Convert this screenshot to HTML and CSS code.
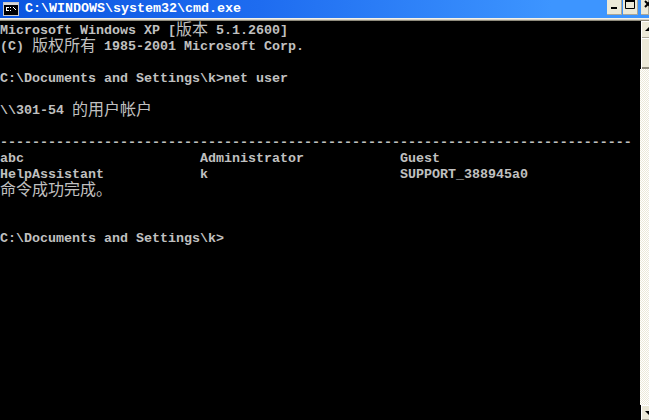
FILE: index.html
```html
<!DOCTYPE html>
<html lang="zh">
<head>
<meta charset="utf-8">
<title>cmd.exe</title>
<link rel="stylesheet" href="styles.css">
</head>
<body>
<div class="window">
  <header class="titlebar">
    <svg class="app-icon" width="16" height="14" viewBox="0 0 16 14">
      <rect x="0.5" y="0.5" width="15" height="13" fill="#000" stroke="#c8c8c8"/>
      <rect x="1" y="1" width="14" height="2" fill="#d8d8d8"/>
      <path d="M3 5h3v1H3zM3 6h1v2H3zM3 8h3v1H3zM7 5h1v1H7zM7 8h1v1H7zM10 5h1v1h-1zM11 6h1v1h-1zM12 7h1v1h-1z" fill="#fff"/>
    </svg>
    <span class="title">C:\WINDOWS\system32\cmd.exe</span>
    <div class="buttons">
      <div class="btn"><svg width="15" height="15" viewBox="0 0 15 15"><rect x="4" y="7" width="6" height="2" fill="#000"/></svg></div>
      <div class="btn"><svg width="15" height="15" viewBox="0 0 15 15"><path d="M2.5 0.5h9v8h-9z" fill="none" stroke="#000"/><rect x="2" y="0" width="10" height="2" fill="#000"/></svg></div>
      <div class="btn close"><svg width="8" height="15" viewBox="0 0 8 15"><path d="M4 1l6 6M10 1L4 7" stroke="#000" stroke-width="2" fill="none"/></svg></div>
    </div>
  </header>
  <div class="rule"></div>
  <div class="main">
    <div class="console">
      <div class="line">Microsoft Windows XP [<span class="cjk">版本</span> 5.1.2600]</div>
      <div class="line">(C) <span class="cjk">版权所有</span> 1985-2001 Microsoft Corp.</div>
      <div class="line"></div>
      <div class="line">C:\Documents and Settings\k&gt;net user</div>
      <div class="line"></div>
      <div class="line">\\301-54 <span class="cjk">的用户帐户</span></div>
      <div class="line"></div>
      <div class="line">-------------------------------------------------------------------------------</div>
      <div class="line">abc                      Administrator            Guest</div>
      <div class="line">HelpAssistant            k                        SUPPORT_388945a0</div>
      <div class="line"><span class="cjk">命令成功完成。</span></div>
      <div class="line"></div>
      <div class="line"></div>
      <div class="line">C:\Documents and Settings\k&gt;</div>
    </div>
    <aside class="scrollbar">
      <div class="arrow up"><svg width="8" height="9" viewBox="0 0 8 9"><path d="M4 7L8 3V7z" fill="#000"/></svg></div>
      <div class="thumb"></div>
      <div class="track"></div>
      <div class="arrow down"><svg width="8" height="9" viewBox="0 0 8 9"><path d="M4 3h4v4z" fill="#000"/></svg></div>
    </aside>
  </div>
</div>
</body>
</html>
```

FILE: styles.css
```css
* { box-sizing: border-box; }
html, body { margin: 0; height: 100%; background: #000; }
.window { width: 649px; height: 420px; display: flex; flex-direction: column; overflow: hidden; }
.titlebar {
  height: 18px; flex: none; display: flex; align-items: center; padding-left: 3px;
  background: linear-gradient(90deg, #0a55e0 0%, #1e6cf0 40%, #3d95ff 85%, #3d95ff 100%);
}
.app-icon { flex: none; }
.title {
  margin-left: 6px; color: #fff; white-space: pre;
  font: bold 13.33px/18px "Liberation Mono", monospace;
}
.buttons { margin-left: auto; display: flex; gap: 1px; align-items: flex-start; height: 18px; }
.btn { width: 15px; height: 15px; background: #ece9d8; box-shadow: inset -1px -1px 0 #aca899; display: flex; }
.btn.close { width: 8px; margin-left: 2px; }
.rule { height: 3px; flex: none; background: linear-gradient(#f4f2e8 0 1px, #d4d0c8 1px 2px, #8f8b7c 2px); }
.main { flex: 1; min-height: 0; display: flex; }
.console {
  flex: 1; min-width: 0; padding-top: 2px; background: #000; color: #c0c0c0;
  font: bold 13.33px/16px "Liberation Mono", "Noto Sans CJK SC", monospace;
}
.line { height: 16px; white-space: pre; }
.cjk { font: 400 16px/0 "Noto Sans CJK SC", sans-serif; vertical-align: -1px; }
.scrollbar { width: 9px; flex: none; display: flex; flex-direction: column; }
.arrow { margin-left: 1px; background: #ece9d8; flex: none; box-shadow: inset 1px 1px 0 #fff, inset 0 -1px 0 #aca899; }
.arrow svg { display: block; }
.arrow.up { height: 17px; padding-top: 3px; }
.arrow.down { height: 15px; padding-top: 3px; }
.thumb { margin-left: 1px; height: 31px; flex: none; background: #ece9d8; box-shadow: inset 1px 1px 0 #fff, inset 0 -2px 0 #8f8b7c; }
.track {
  flex: 1;
  background-color: #fff;
  background-image: conic-gradient(#ece9d8 25%, transparent 0 50%, #ece9d8 0 75%, transparent 0);
  background-size: 2px 2px;
}
```
